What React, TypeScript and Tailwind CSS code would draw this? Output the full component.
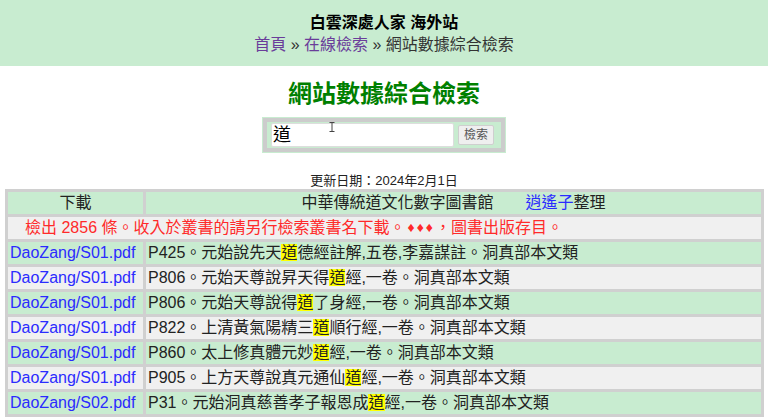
import React from 'react';

interface ResultRow {
  file: string;
  before: string;
  after: string;
}

// search hits, 道 is highlighted between before/after
const rows: ResultRow[] = [
  { file: 'DaoZang/S01.pdf', before: 'P425。元始說先天', after: '德經註解,五卷,李嘉謀註。洞真部本文類' },
  { file: 'DaoZang/S01.pdf', before: 'P806。元始天尊說昇天得', after: '經,一卷。洞真部本文類' },
  { file: 'DaoZang/S01.pdf', before: 'P806。元始天尊說得', after: '了身經,一卷。洞真部本文類' },
  { file: 'DaoZang/S01.pdf', before: 'P822。上清黃氣陽精三', after: '順行經,一卷。洞真部本文類' },
  { file: 'DaoZang/S01.pdf', before: 'P860。太上修真體元妙', after: '經,一卷。洞真部本文類' },
  { file: 'DaoZang/S01.pdf', before: 'P905。上方天尊說真元通仙', after: '經,一卷。洞真部本文類' },
  { file: 'DaoZang/S02.pdf', before: 'P31。元始洞真慈善孝子報恩成', after: '經,一卷。洞真部本文類' },
  { file: 'DaoZang/S02.pdf', before: 'P49。太上洞玄靈寶滅度五鍊生屍真妙', after: '經,一卷。洞真部本文類' },
];

const IBeam = () => (
  <svg className="absolute left-[66px] top-[4px]" width="6" height="10" viewBox="0 0 6 10">
    <path d="M0.5 0.5h5M3 0.5v9M0.5 9.5h5" stroke="#444" strokeWidth="1" fill="none" />
  </svg>
);

// fixed-height cell body so mixed latin/CJK fonts don't stretch the row
const Cell = ({ className = '', children }: { className?: string; children: React.ReactNode }) => (
  <div className={`h-[22px] overflow-hidden whitespace-nowrap leading-[22px] ${className}`}>{children}</div>
);

export default function App() {
  return (
    <div className="min-h-screen bg-white text-[#222] font-['Liberation_Sans','Noto_Sans_CJK_TC',sans-serif]">
      <header className="h-[66px] bg-[#c8ecd0] pt-[12px] text-center">
        <div className="text-[16px] font-bold leading-[22px] text-black">白雲深處人家 海外站</div>
        <nav className="text-[16px] leading-[22px] text-[#333]">
          <a className="text-[#6a3d9a]">首頁</a> » <a className="text-[#6a3d9a]">在線檢索</a> » 網站數據綜合檢索
        </nav>
      </header>

      <h1 className="mt-[12px] text-center text-[24px] font-bold leading-[32px] text-[#008000]">網站數據綜合檢索</h1>

      <div className="mt-[7px] flex justify-center">
        <div className="relative border border-[#c8ecd0]">
          <div className="flex items-center gap-[4px] border-4 border-[#cccccc] bg-[#c8ecd0] py-[1px] pl-[4px] pr-[7px]">
            <div className="flex h-[24px] w-[183px] items-center rounded-[2px] border border-[#dddddd] bg-white pl-[1px] text-[18px] text-black">
              道
            </div>
            <button className="h-[20px] w-[36px] rounded-[2px] border border-[#cfcfcf] bg-[#efefef] text-[12px] leading-[18px] text-[#555]">
              檢索
            </button>
          </div>
          <IBeam />
        </div>
      </div>

      <p className="mt-[20px] text-center text-[13px] leading-[16px] text-[#222]">更新日期：2024年2月1日</p>

      <table className="ml-[5px] w-[759px] table-fixed border-separate border-spacing-[3px] bg-[#d0d0d0] text-[16px]">
        <colgroup>
          <col className="w-[135px]" />
          <col className="w-[615px]" />
        </colgroup>
        <tbody>
          <tr>
            <td className="bg-[#c8ecd0] p-0">
              <Cell className="text-center">下載</Cell>
            </td>
            <td className="bg-[#c8ecd0] p-0">
              <Cell className="text-center">
                中華傳統道文化數字圖書館　　<a className="text-[#2b2bff]">逍遙子</a>整理
              </Cell>
            </td>
          </tr>
          <tr>
            <td colSpan={2} className="bg-[#f0f0f0] p-0">
              <Cell className="pl-[17px] text-[#ff2a2a]">
                檢出 2856 條。收入於叢書的請另行檢索叢書名下載。
                <span className="ml-[2px] align-[1px] text-[14px] leading-none tracking-[2px]">♦♦♦</span>，圖書出版存目。
              </Cell>
            </td>
          </tr>
          {rows.map((r, i) => {
            const bg = i % 2 === 0 ? 'bg-[#c8ecd0]' : 'bg-[#f0f0f0]';
            return (
              <tr key={i}>
                <td className={`p-0 ${bg}`}>
                  <Cell className="pl-[2px] text-[#2b2bff]">{r.file}</Cell>
                </td>
                <td className={`p-0 ${bg}`}>
                  <Cell className="pl-[2px]">
                    {r.before}
                    <span className="bg-[#ffff00]">道</span>
                    {r.after}
                  </Cell>
                </td>
              </tr>
            );
          })}
        </tbody>
      </table>
    </div>
  );
}
